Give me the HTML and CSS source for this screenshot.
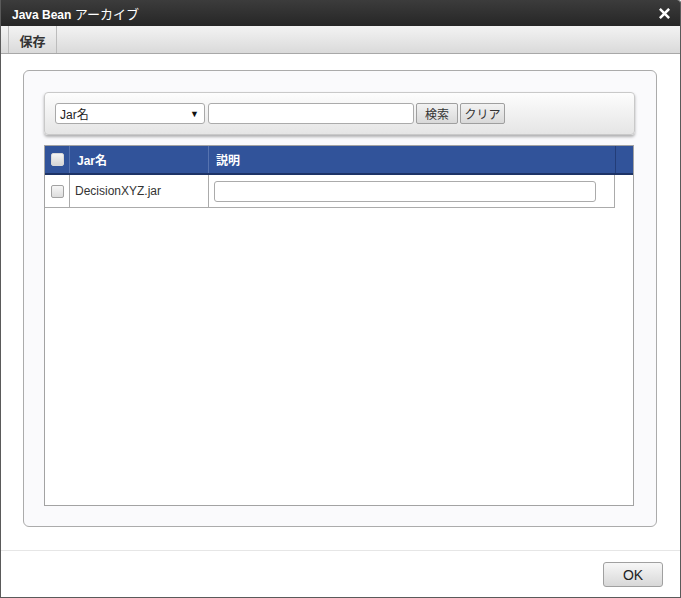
FILE: index.html
```html
<!DOCTYPE html>
<html lang="ja">
<head>
<meta charset="utf-8">
<title>Java Bean アーカイブ</title>
<link rel="stylesheet" href="styles.css">
</head>
<body>
<div class="dialog">
  <div class="titlebar">
    <span class="title"><b>Java Bean</b> <span class="title-jp">アーカイブ</span></span>
    <svg class="close" width="11" height="11" viewBox="0 0 11 11"><path d="M1.8 1.8 L9.2 9.2 M9.2 1.8 L1.8 9.2" stroke="#fff" stroke-width="2.6" stroke-linecap="square"/></svg>
  </div>
  <div class="toolbar">
    <div class="tab">保存</div>
  </div>
  <div class="body">
    <div class="panel">
      <div class="search">
        <div class="select"><span>Jar名</span><span class="arrow">▼</span></div>
        <div class="textbox search-text"></div>
        <div class="btn btn-search">検索</div>
        <div class="btn btn-clear">クリア</div>
      </div>
      <div class="grid">
        <div class="grid-head">
          <div class="cell c-check"><span class="checkbox head-check"></span></div>
          <div class="cell c-name">Jar名</div>
          <div class="cell c-desc">説明</div>
          <div class="cell c-fill"></div>
        </div>
        <div class="grid-row">
          <div class="cell c-check"><span class="checkbox"></span></div>
          <div class="cell c-name">DecisionXYZ.jar</div>
          <div class="cell c-desc"><div class="textbox row-text"></div></div>
        </div>
      </div>
    </div>
  </div>
  <div class="footer">
    <div class="btn ok">OK</div>
  </div>
</div>
</body>
</html>
```
FILE: styles.css
```css
* { box-sizing: border-box; }
html, body { margin: 0; padding: 0; background: #fff; }
body {
  font-family: "Liberation Sans", Arial, "Noto Sans CJK JP", sans-serif;
  font-size: 12px;
  color: #333;
}
.dialog {
  width: 681px;
  height: 598px;
  border: 1px solid #5a5a5a;
  border-top: none;
  border-top-right-radius: 3px;
  display: flex;
  flex-direction: column;
  background: #fff;
}
.titlebar {
  height: 26px;
  flex: none;
  background: linear-gradient(#3c3c3c, #262626);
  display: flex;
  align-items: center;
  justify-content: space-between;
  padding: 0 10px 0 11px;
  color: #fff;
  font-size: 12px;
  border-top-right-radius: 3px;
}
.title b { font-weight: bold; }
.title-jp { font-size: 13px; font-weight: normal; }
.close { display: block; margin-top: 1px; }
.toolbar {
  height: 28px;
  flex: none;
  background: linear-gradient(#f3f3f3, #dadada);
  border-bottom: 1px solid #a8a8a8;
  padding-left: 7px;
  display: flex;
}
.tab {
  width: 49px;
  border-left: 1px solid #bcbcbc;
  border-right: 1px solid #bcbcbc;
  display: flex;
  align-items: center;
  justify-content: center;
  font-weight: bold;
  font-size: 13px;
  color: #333;
  padding-top: 1px;
}
.body {
  flex: none;
  height: 496px;
  padding: 16px 23px 0 22px;
}
.panel {
  height: 457px;
  border: 1px solid #ababab;
  border-radius: 6px;
  background: #fafafc;
  padding: 21px 21px 0 20px;
}
.search {
  height: 43px;
  border: 1px solid #c9c9c9;
  border-radius: 4px;
  background: linear-gradient(#fdfdfd, #e5e5e5);
  box-shadow: 0 2px 3px rgba(0,0,0,0.3);
  padding: 10px 0 0 10px;
  display: flex;
  align-items: flex-start;
}
.select {
  width: 150px;
  height: 21px;
  border: 1px solid #a9a9a9;
  border-radius: 3px;
  background: #fff;
  display: flex;
  align-items: center;
  justify-content: space-between;
  padding: 0 5px 0 4px;
  color: #222;
  font-size: 12px;
}
.arrow { font-size: 9px; color: #111; }
.textbox {
  height: 21px;
  border: 1px solid #ababab;
  border-radius: 3px;
  background: #fff;
}
.search-text { width: 206px; margin-left: 3px; }
.btn {
  height: 21px;
  border: 1px solid #9f9f9f;
  border-radius: 2px;
  background: linear-gradient(#f2f2f2, #d9d9d9);
  display: flex;
  align-items: center;
  justify-content: center;
  color: #333;
  font-size: 12px;
}
.btn-search { width: 42px; margin-left: 2px; }
.btn-clear { width: 45px; margin-left: 2px; }
.grid {
  margin-top: 10px;
  width: 590px;
  height: 361px;
  border: 1px solid #a3a3a3;
  background: #fff;
}
.grid-head {
  height: 29px;
  background: #31539a;
  border-bottom: 2px solid #1d3366;
  display: flex;
  color: #fff;
  font-weight: bold;
}
.grid-row {
  width: 570px;
  height: 33px;
  display: flex;
  border-bottom: 1px solid #ababab;
  border-right: 1px solid #ababab;
}
.cell {
  display: flex;
  align-items: center;
  height: 100%;
}
.c-check { width: 25px; justify-content: center; border-right: 1px solid #ababab; padding-left: 1px; }
.c-name { width: 139px; border-right: 1px solid #ababab; padding-left: 5px; }
.c-desc { width: 405px; padding-left: 5px; }
.grid-head .c-check { border-right-color: #5673b0; }
.grid-head .c-name { border-right-color: #5673b0; padding-left: 7px; }
.grid-head .c-desc { width: 407px; padding-left: 7px; border-right: 1px solid #233d78; }
.c-fill { flex: 1; }
.checkbox {
  display: block;
  width: 13px;
  height: 13px;
  border: 1px solid #a2a2a2;
  border-radius: 2px;
  background: linear-gradient(#f7f7f7, #dcdcdc);
}
.head-check { border-color: #d8d8d8; background: linear-gradient(#f4f4f4, #d6d6d6); }
.row-text { width: 382px; }
.footer {
  flex: 1;
  border-top: 1px solid #e6e6e6;
  display: flex;
  justify-content: flex-end;
  padding: 11px 17px 0 0;
}
.ok {
  width: 60px;
  height: 25px;
  border-radius: 3px;
  border-color: #a0a0a0;
  background: linear-gradient(#f7f7f7, #d8d8d8);
  font-size: 14px;
  color: #222;
}
```
